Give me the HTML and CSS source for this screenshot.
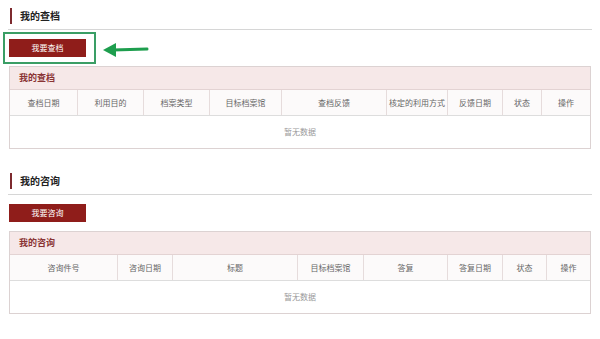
FILE: index.html
```html
<!DOCTYPE html>
<html lang="zh-CN">
<head>
    <meta charset="UTF-8">
    <meta name="viewport" content="width=device-width, initial-scale=1.0">
    <title>我的查档</title>
    <link rel="stylesheet" href="styles.css">
</head>
<body>
    <div class="section">
        <div class="sec-title"><span class="bar"></span>我的查档</div>
        <div class="btn-row">
            <button type="button" class="btn">我要查档</button>
            <div class="mark"></div>
            <svg class="arrow" width="46" height="16" viewBox="0 0 46 16">
                <line x1="10" y1="8" x2="44" y2="7" stroke="#1e9e4e" stroke-width="3" stroke-linecap="round"/>
                <polygon points="0,8 13,1 13,15" fill="#1e9e4e"/>
            </svg>
        </div>
        <div class="panel">
            <div class="panel-head">我的查档</div>
            <div class="cols cols-a">
                <div>查档日期</div>
                <div>利用目的</div>
                <div>档案类型</div>
                <div>目标档案馆</div>
                <div>查档反馈</div>
                <div>核定的利用方式</div>
                <div>反馈日期</div>
                <div>状态</div>
                <div>操作</div>
            </div>
            <div class="empty">暂无数据</div>
        </div>
    </div>

    <div class="section second">
        <div class="sec-title"><span class="bar"></span>我的咨询</div>
        <div class="btn-row">
            <button type="button" class="btn">我要咨询</button>
        </div>
        <div class="panel">
            <div class="panel-head">我的咨询</div>
            <div class="cols cols-b">
                <div>咨询件号</div>
                <div>咨询日期</div>
                <div>标题</div>
                <div>目标档案馆</div>
                <div>答复</div>
                <div>答复日期</div>
                <div>状态</div>
                <div>操作</div>
            </div>
            <div class="empty">暂无数据</div>
        </div>
    </div>
</body>
</html>
```
FILE: styles.css
```css
html, body {
    margin: 0;
    background: #fff;
}

body {
    padding: 8px 9px 0 9px;
    font-family: "Noto Sans CJK SC", "Noto Sans", sans-serif;
    color: #333;
}

.section.second {
    margin-top: 24px;
}

.sec-title {
    display: flex;
    align-items: center;
    height: 16px;
    padding-bottom: 5px;
    margin: 0 -1px;
    border-bottom: 1px solid #d6d6d6;
    font-size: 10px;
    font-weight: bold;
    color: #222;
    line-height: 16px;
}

.sec-title .bar {
    width: 2px;
    height: 16px;
    margin: 0 8px 0 2px;
    background: #7d2a2e;
}

.btn-row {
    position: relative;
    height: 18px;
    margin: 9px 0 9px 0;
}

.btn {
    display: block;
    width: 77px;
    height: 18px;
    margin: 0;
    padding: 0;
    border: none;
    background: #8f1d1a;
    color: #fff;
    font-family: inherit;
    font-size: 8px;
    line-height: 18px;
}

/* annotation overlay */
.mark {
    position: absolute;
    left: -6px;
    top: -7px;
    width: 89px;
    height: 28px;
    border: 2px solid #3a9e65;
}

.arrow {
    position: absolute;
    left: 94px;
    top: 3px;
}

.panel {
    border: 1px solid #dcd2d2;
}

.panel-head {
    height: 22px;
    line-height: 22px;
    padding-left: 9px;
    background: #f6e8e8;
    border-bottom: 1px solid #e3d3d3;
    font-size: 9px;
    font-weight: bold;
    color: #8a3434;
}

.cols {
    display: grid;
    height: 25px;
    background: #fcfafa;
    border-bottom: 1px solid #ddd;
}

.cols-a {
    grid-template-columns: 68px 66px 66px 72px 105px 61px 55px 39px 1fr;
}

.cols-b {
    grid-template-columns: 108px 55px 125px 66px 84px 55px 44px 1fr;
}

.cols div {
    display: flex;
    align-items: center;
    justify-content: center;
    border-right: 1px solid #e6dcdc;
    font-size: 8px;
    color: #666;
    white-space: nowrap;
}

.cols div:last-child {
    border-right: none;
}

.empty {
    height: 32px;
    line-height: 32px;
    text-align: center;
    font-size: 8px;
    color: #999;
}
```
